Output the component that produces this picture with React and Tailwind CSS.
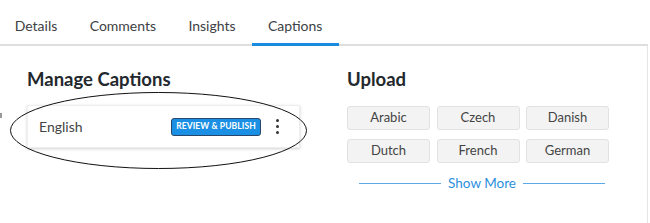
import React from "react";

const tabs = ["Details", "Comments", "Insights", "Captions"];
const langs = ["Arabic", "Czech", "Danish", "Dutch", "French", "German"];

const App = () => {
  return (
    <div className="relative w-[650px] h-[223px] bg-white overflow-hidden font-['Lato','Open_Sans',sans-serif] text-[#333]">
      {/* tabs */}
      <div className="flex h-[46px] border-b-2 border-[#dedede] w-[648px]">
        <div className="flex -ml-[1.5px]">
          {tabs.map((t) => (
            <div
              key={t}
              className="relative px-[16.2px] flex items-center pt-[7px] text-[14px] text-[#3d4145]"
            >
              {t}
              {t === "Captions" && (
                <span className="absolute left-0 right-0 -bottom-[2px] h-[3px] bg-[#1a8ce0]" />
              )}
            </div>
          ))}
        </div>
      </div>

      <div className="flex w-[648px] h-[177px] border-r border-[#e6e6e6]">
        {/* manage captions */}
        <div className="w-[320px] pl-[27px] pt-[21px]">
          <h2 className="text-[18.5px] font-bold text-[#23282d] leading-[24px]">
            Manage Captions
          </h2>
          <div className="mt-[14px] w-[273px] h-[43px] flex items-center pl-[11px] pr-[20px] bg-white border border-[#eeeeee] shadow-[0_1px_3px_rgba(0,0,0,0.18)]">
            <span className="text-[14px] text-[#444]">English</span>
            <button className="ml-auto h-[18px] w-[90px] rounded-[3px] bg-[#1a8fe3] border border-[#27466a] text-white text-[8.5px] font-bold tracking-[0.1px] leading-none">
              REVIEW &amp; PUBLISH
            </button>
            <div className="ml-[15px] flex flex-col gap-[3px]">
              <span className="w-[3px] h-[3px] rounded-full bg-[#333]" />
              <span className="w-[3px] h-[3px] rounded-full bg-[#333]" />
              <span className="w-[3px] h-[3px] rounded-full bg-[#333]" />
            </div>
          </div>
        </div>

        {/* upload */}
        <div className="pl-[27px] pt-[21px]">
          <h2 className="text-[18.5px] font-bold text-[#23282d] leading-[24px]">Upload</h2>
          <div className="mt-[15px] grid grid-cols-[83px_83px_83px] gap-x-[6.5px] gap-y-[9px]">
            {langs.map((l) => (
              <div
                key={l}
                className="h-[24px] flex items-center justify-center rounded-[3px] bg-[#f3f3f3] border border-[#e2e2e2] text-[13px] text-[#444]"
              >
                {l}
              </div>
            ))}
          </div>
          <div className="mt-[10px] ml-[12px] w-[246px] flex items-center gap-[7px]">
            <span className="flex-1 h-px bg-[#5aa8e6]" />
            <span className="text-[13.5px] text-[#2a8fdc]">Show More</span>
            <span className="flex-1 h-px bg-[#5aa8e6]" />
          </div>
        </div>
      </div>

      {/* annotation ellipse */}
      <svg
        className="absolute left-[9px] top-[91px] pointer-events-none"
        width="299"
        height="79"
        viewBox="0 0 299 79"
      >
        <ellipse cx="149.5" cy="39.5" rx="148" ry="38" fill="none" stroke="#111" strokeWidth="1" />
      </svg>
      <span className="absolute left-0 top-[113px] w-[2px] h-[5px] bg-[#999]" />
    </div>
  );
};

export default App;
